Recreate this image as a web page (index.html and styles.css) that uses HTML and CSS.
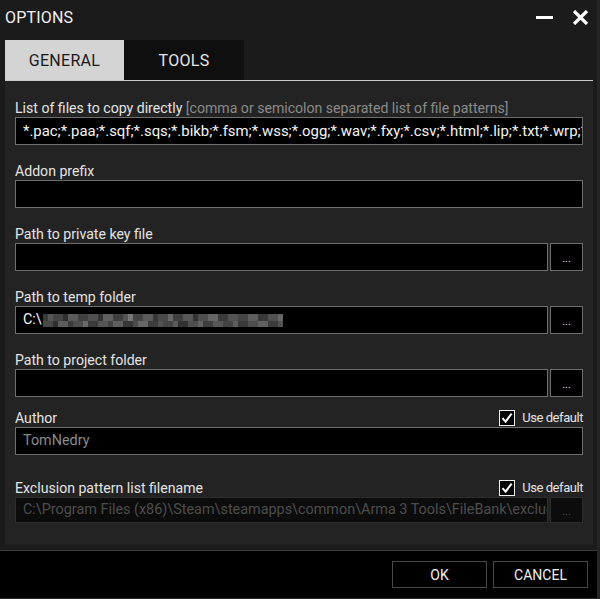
FILE: index.html
```html
<!DOCTYPE html>
<html>
<head>
<meta charset="utf-8">
<link rel="stylesheet" href="styles.css">
</head>
<body>
<div class="window">
  <div class="titlebar">
    <span class="title">OPTIONS</span>
    <div class="winbtns">
      <svg class="minbtn" width="17" height="4" viewBox="0 0 17 4"><rect x="0" y="0" width="17" height="3" fill="#fff"/></svg>
      <svg class="closebtn" width="17" height="15" viewBox="0 0 17 15"><path d="M2 1 L15 14 M15 1 L2 14" stroke="#fff" stroke-width="3.2" fill="none"/></svg>
    </div>
  </div>
  <div class="tabs">
    <div class="tab active">GENERAL</div>
    <div class="tab">TOOLS</div>
  </div>
  <div class="panel">
    <div class="field">
      <div class="label">List of files to copy directly <span class="hint">[comma or semicolon separated list of file patterns]</span></div>
      <div class="row"><div class="input wide">*.pac;*.paa;*.sqf;*.sqs;*.bikb;*.fsm;*.wss;*.ogg;*.wav;*.fxy;*.csv;*.html;*.lip;*.txt;*.wrp;*.bisurf;*.xml</div></div>
    </div>
    <div class="field">
      <div class="label">Addon prefix</div>
      <div class="row"><div class="input"></div></div>
    </div>
    <div class="field">
      <div class="label">Path to private key file</div>
      <div class="row"><div class="input"></div><div class="browse">...</div></div>
    </div>
    <div class="field">
      <div class="label">Path to temp folder</div>
      <div class="row"><div class="input">C:\<span class="blur"></span></div><div class="browse">...</div></div>
    </div>
    <div class="field">
      <div class="label">Path to project folder</div>
      <div class="row"><div class="input"></div><div class="browse">...</div></div>
    </div>
    <div class="field author">
      <div class="label split"><span>Author</span><span class="check"><span class="box"><svg width="14" height="14" viewBox="0 0 14 14"><path d="M2.5 7.2 L5.6 10.6 L11.6 2.6" stroke="#fff" stroke-width="2" fill="none"/></svg></span>Use default</span></div>
      <div class="row"><div class="input muted">TomNedry</div></div>
    </div>
    <div class="field excl">
      <div class="label split"><span>Exclusion pattern list filename</span><span class="check"><span class="box"><svg width="14" height="14" viewBox="0 0 14 14"><path d="M2.5 7.2 L5.6 10.6 L11.6 2.6" stroke="#fff" stroke-width="2" fill="none"/></svg></span>Use default</span></div>
      <div class="row"><div class="input disabled"><span class="clip">C:\Program Files (x86)\Steam\steamapps\common\Arma 3 Tools\FileBank\exclude.lst</span></div><div class="browse disabled">...</div></div>
    </div>
  </div>
  <div class="gap"></div>
  <div class="footer">
    <div class="btn">OK</div>
    <div class="btn">CANCEL</div>
  </div>
</div>
</body>
</html>
```

FILE: styles.css
```css
html, body {
  margin: 0;
  padding: 0;
  background: #252525;
}
body {
  width: 600px;
  height: 599px;
  overflow: hidden;
  font-family: Roboto, "Liberation Sans", sans-serif;
}
.window {
  width: 597px;
  height: 599px;
  background: #1b1b1b;
  display: flex;
  flex-direction: column;
}
.titlebar {
  height: 40px;
  display: flex;
  align-items: flex-start;
  justify-content: space-between;
}
.title {
  color: #f0f0f0;
  font-size: 16px;
  letter-spacing: 0.2px;
  margin-left: 5px;
  margin-top: 9px;
  line-height: 18px;
}
.winbtns {
  display: flex;
  align-items: flex-start;
  margin-right: 8px;
  margin-top: 10px;
}
.minbtn {
  margin-top: 6px;
  margin-right: 19px;
}
.tabs {
  margin: 0 4px 0 5px;
  height: 40px;
  border-bottom: 1px solid #c8c8c8;
  display: flex;
}
.tab {
  width: 119px;
  height: 40px;
  background: #0f0f0f;
  color: #e6e6e6;
  font-size: 16px;
  letter-spacing: 0.3px;
  display: flex;
  align-items: center;
  justify-content: center;
}
.tab + .tab {
  width: 120px;
}
.tab.active {
  background: #d4d4d4;
  color: #1a1a1a;
}
.panel {
  margin: 0 4px 0 5px;
  background: #232323;
  height: 464px;
  padding: 18px 10px 0 10px;
  box-sizing: border-box;
  display: flex;
  flex-direction: column;
}
.field {
  margin-bottom: 17px;
}
.field.author {
  margin-top: -5px;
  margin-bottom: 24px;
}
.label {
  height: 18px;
  line-height: 18px;
  font-size: 14.1px;
  color: #e4e4e4;
  white-space: nowrap;
}
.label.split {
  display: flex;
  justify-content: space-between;
  align-items: center;
}
.hint {
  color: #8a8a8a;
}
.check {
  display: flex;
  align-items: center;
  font-size: 13px;
  letter-spacing: -0.45px;
  color: #e4e4e4;
}
.box {
  width: 14px;
  height: 14px;
  border: 1px solid #f0f0f0;
  background: #000;
  margin-right: 7px;
  display: flex;
}
.row {
  display: flex;
  gap: 2px;
}
.input {
  flex: 1;
  min-width: 0;
  height: 28px;
  box-sizing: border-box;
  border: 1px solid #6e6e6e;
  background: #000;
  color: #f4f4f4;
  font-size: 14.4px;
  line-height: 26px;
  padding-left: 7px;
  white-space: nowrap;
  overflow: hidden;
  display: flex;
  align-items: center;
}
.input.wide {
  font-size: 14.9px;
}
.clip {
  overflow: hidden;
  min-width: 0;
}
.input.muted {
  color: #8a8a8a;
}
.input.disabled,
.browse.disabled {
  height: 26px;
  background: #0c0c0c;
  border-color: #2e2e2e;
  color: #4c4c4c;
}
.browse {
  flex: none;
  width: 33px;
  height: 28px;
  box-sizing: border-box;
  border: 1px solid #6e6e6e;
  background: #000;
  color: #e0e0e0;
  font-size: 11px;
  display: flex;
  align-items: center;
  justify-content: center;
  padding-top: 2px;
}
.blur {
  display: inline-block;
  width: 240px;
  height: 13px;
  margin-left: 1px;
  background:
    linear-gradient(to right,
      #3a3a3a 0 5px, #555 5px 10px, #444 10px 20px, #2e2e2e 20px 25px, #5a5a5a 25px 35px, #404040 35px 45px,
      #4f4f4f 45px 55px, #333 55px 60px, #606060 60px 70px, #3d3d3d 70px 80px, #555 80px 85px, #777 85px 90px,
      #444 90px 100px, #5b5b5b 100px 110px, #363636 110px 115px, #4a4a4a 115px 125px, #666 125px 130px,
      #3f3f3f 130px 140px, #575757 140px 150px, #333 150px 155px, #4e4e4e 155px 165px, #656565 165px 175px,
      #3a3a3a 175px 185px, #525252 185px 195px, #444 195px 205px, #5e5e5e 205px 215px, #383838 215px 225px,
      #505050 225px 235px, #666 235px 240px) top / 100% 7px no-repeat,
    linear-gradient(to right,
      #484848 0 10px, #2f2f2f 10px 15px, #5c5c5c 15px 25px, #3b3b3b 25px 30px, #4d4d4d 30px 40px, #6a6a6a 40px 45px,
      #3a3a3a 45px 55px, #555 55px 65px, #444 65px 70px, #5f5f5f 70px 80px, #363636 80px 90px, #4b4b4b 90px 95px,
      #676767 95px 105px, #3c3c3c 105px 115px, #525252 115px 120px, #454545 120px 130px, #5a5a5a 130px 135px,
      #323232 135px 145px, #4f4f4f 145px 155px, #626262 155px 160px, #3e3e3e 160px 170px, #575757 170px 180px,
      #444 180px 190px, #5d5d5d 190px 195px, #393939 195px 205px, #4e4e4e 205px 215px, #606060 215px 225px,
      #3b3b3b 225px 235px, #525252 235px 240px) bottom / 100% 6px no-repeat;
}
.gap {
  height: 5px;
  background: #1b1b1b;
}
.footer {
  flex: 1;
  background: #000;
  border-top: 1px solid #3c3c3c;
  border-bottom: 1px solid #2a2a2a;
  display: flex;
  justify-content: flex-end;
  align-items: flex-start;
  padding: 10px 9px 0 0;
  gap: 6px;
}
.btn {
  width: 95px;
  height: 27px;
  box-sizing: border-box;
  border: 1px solid #484848;
  color: #f0f0f0;
  font-size: 14px;
  display: flex;
  align-items: center;
  justify-content: center;
}
```
